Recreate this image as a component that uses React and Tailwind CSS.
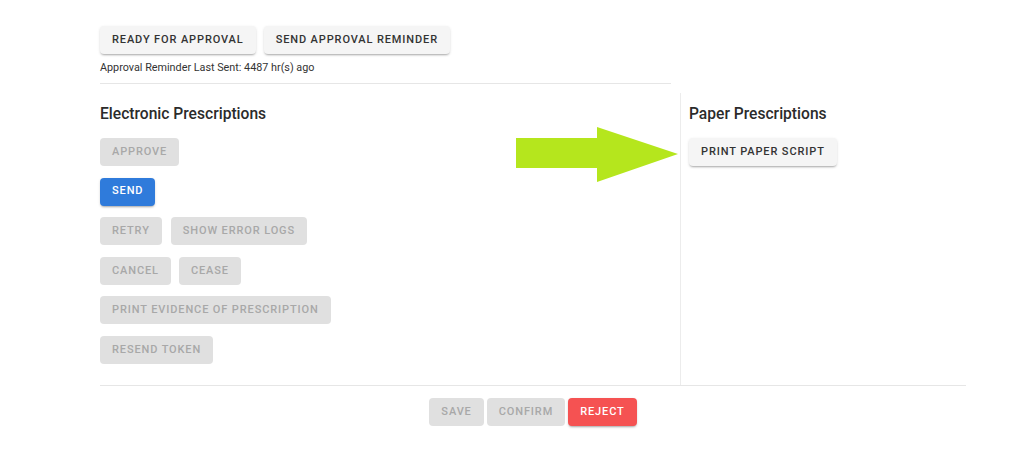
const font = { fontFamily: 'Roboto, "Liberation Sans", sans-serif' }

function Btn({ children, variant = 'default', className = '' }) {
  const base =
    'h-[28px] px-[12px] rounded-[4px] text-[11px] font-medium uppercase tracking-[0.08em] flex items-center justify-center whitespace-nowrap'
  const styles = {
    default: 'bg-[#f5f5f5] text-[#333] shadow-[0_2px_2px_-1px_rgba(0,0,0,0.25),0_1px_3px_rgba(0,0,0,0.12)]',
    disabled: 'bg-[#e0e0e0] text-[#a8a8a8]',
    blue: 'bg-[#2f7bdb] text-white shadow-[0_2px_2px_-1px_rgba(0,0,0,0.25),0_1px_3px_rgba(0,0,0,0.12)]',
    red: 'bg-[#f55252] text-white shadow-[0_2px_2px_-1px_rgba(0,0,0,0.25),0_1px_3px_rgba(0,0,0,0.12)]',
  }
  return <button className={`${base} ${styles[variant]} ${className}`}>{children}</button>
}

export default function App() {
  return (
    <div className="relative w-[1024px] h-[465px] bg-white" style={font}>
      <div className="pl-[100px] pt-[26px] w-[966px]">
        <div className="w-[571px]">
          <div className="flex gap-[8px]">
            <Btn>Ready for approval</Btn>
            <Btn>Send approval reminder</Btn>
          </div>
          <p className="mt-[7px] text-[10.8px] text-[#333] leading-[14px]">
            Approval Reminder Last Sent: 4487 hr(s) ago
          </p>
          <div className="mt-[8px] h-px bg-[#e6e6e6]" />
        </div>

        <div className="flex mt-[9px]">
          <div className="w-[580px] pt-[12px] pb-[21px]">
            <h2 className="text-[15.6px] font-medium text-[#2b2b2b] leading-[18px]">Electronic Prescriptions</h2>
            <div className="mt-[15px] flex flex-col gap-[11.6px]">
              <div className="flex"><Btn variant="disabled">Approve</Btn></div>
              <div className="flex"><Btn variant="blue">Send</Btn></div>
              <div className="flex gap-[9px]">
                <Btn variant="disabled">Retry</Btn>
                <Btn variant="disabled">Show error logs</Btn>
              </div>
              <div className="flex gap-[8px]">
                <Btn variant="disabled">Cancel</Btn>
                <Btn variant="disabled">Cease</Btn>
              </div>
              <div className="flex"><Btn variant="disabled">Print evidence of prescription</Btn></div>
              <div className="flex"><Btn variant="disabled">Resend token</Btn></div>
            </div>
          </div>
          <div className="flex-1 border-l border-[#ececec] pl-[8px] pt-[12px]">
            <h2 className="text-[15.6px] font-medium text-[#2b2b2b] leading-[18px]">Paper Prescriptions</h2>
            <div className="mt-[15px] flex">
              <Btn>Print paper script</Btn>
            </div>
          </div>
        </div>

        <div className="h-px bg-[#e6e6e6]" />
        <div className="flex justify-center gap-[3px] mt-[12px]">
          <Btn variant="disabled">Save</Btn>
          <Btn variant="disabled">Confirm</Btn>
          <Btn variant="red">Reject</Btn>
        </div>
      </div>

      <svg className="absolute left-[516px] top-[127px]" width="163" height="56" viewBox="0 0 163 56">
        <polygon points="0,11 81,11 81,0 162,27 81,55 81,41 0,41" fill="#b5e61d" />
      </svg>
    </div>
  )
}
